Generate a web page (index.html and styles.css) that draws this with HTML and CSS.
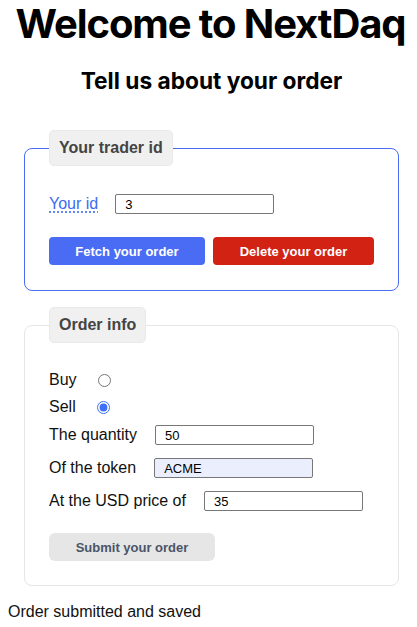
FILE: index.html
```html
<!DOCTYPE html>
<html lang="en">
<head>
<meta charset="utf-8">
<title>NextDaq</title>
<link rel="stylesheet" href="styles.css">
</head>
<body>
<h1 class="title">Welcome to NextDaq</h1>
<h2 class="subtitle">Tell us about your order</h2>

<fieldset class="box box-active">
  <legend class="box-legend">Your trader id</legend>
  <div class="row row-id">
    <label class="label label-link" for="trader">Your id</label>
    <input class="field" id="trader" type="text" value="3">
  </div>
  <div class="actions">
    <button class="btn btn-fetch" type="button">Fetch your order</button>
    <button class="btn btn-delete" type="button">Delete your order</button>
  </div>
</fieldset>

<fieldset class="box box-plain">
  <legend class="box-legend">Order info</legend>
  <div class="row row-radio">
    <label class="label" for="buy">Buy</label>
    <input class="radio" id="buy" type="radio" name="side">
  </div>
  <div class="row row-radio row-sell">
    <label class="label" for="sell">Sell</label>
    <input class="radio" id="sell" type="radio" name="side" checked>
  </div>
  <div class="row row-input row-qty">
    <label class="label" for="qty">The quantity</label>
    <input class="field" id="qty" type="text" value="50">
  </div>
  <div class="row row-input">
    <label class="label" for="token">Of the token</label>
    <input class="field field-filled" id="token" type="text" value="ACME">
  </div>
  <div class="row row-input">
    <label class="label" for="price">At the USD price of</label>
    <input class="field" id="price" type="text" value="35">
  </div>
  <div class="actions actions-submit">
    <button class="btn btn-submit" type="button">Submit your order</button>
  </div>
</fieldset>

<p class="status">Order submitted and saved</p>
</body>
</html>
```

FILE: styles.css
```css
body {
  margin: 0 8px;
  font-family: "Liberation Sans", Arial, sans-serif;
  font-size: 16px;
  color: #111;
  background: #fff;
}

.title {
  display: flex;
  justify-content: center;
  margin: 0 0 0 4px;
  font-family: Inter, "Noto Sans", sans-serif;
  font-size: 40px;
  font-weight: 700;
  line-height: 48px;
  letter-spacing: -1.1px;
  white-space: nowrap;
  color: #000;
}

.subtitle {
  margin: 19px 0 36px;
  padding-left: 6px;
  font-family: Inter, "Noto Sans", sans-serif;
  font-size: 22.7px;
  font-weight: 700;
  line-height: 27px;
  text-align: center;
  color: #000;
}

.box {
  box-sizing: border-box;
  width: 375px;
  margin: 0 0 0 16px;
  padding: 25px 24px 25px 24px;
  border-radius: 8px;
  min-inline-size: 0;
}

.box-active {
  border: 1px solid #4a6cf4;
}

.box-plain {
  margin-top: 16px;
  padding-bottom: 24px;
  border: 1px solid #e6e6e6;
}

.box-legend {
  padding: 8px 9px;
  border: 1px solid #e9e9e9;
  border-radius: 5px;
  background: #f0f0f0;
  color: #444;
  font-size: 16px;
  font-weight: 700;
  line-height: 18px;
}

.row {
  display: flex;
  align-items: center;
}

.row-id {
  height: 26px;
}

.row-radio {
  height: 24px;
}

.row-sell {
  margin-top: 3px;
}

.row-input {
  height: 26px;
  margin-top: 7px;
}

.row-qty {
  margin-top: 3px;
}

.label {
  margin-right: 18px;
  line-height: 18px;
}

.label-link {
  margin-right: 17px;
  color: #3d6cf0;
  text-decoration: underline dotted #3d6cf0;
  text-underline-offset: 3px;
}

.radio {
  width: 13px;
  height: 13px;
  margin: 0 0 0 3px;
  accent-color: #3f6ff5;
}

.field {
  box-sizing: border-box;
  width: 159px;
  height: 20px;
  margin: 0;
  padding: 0 9px;
  border: 1px solid #777;
  border-radius: 2px;
  font-family: "Liberation Sans", Arial, sans-serif;
  font-size: 13px;
  color: #000;
  background: #fff;
}

.field-filled {
  background: #ebeefd;
}

.actions {
  display: flex;
  gap: 8px;
  margin-top: 20px;
}

.actions-submit {
  margin-top: 19px;
}

.btn {
  box-sizing: border-box;
  height: 28px;
  padding: 0 24px;
  border: none;
  border-radius: 4px;
  font-family: "Liberation Sans", Arial, sans-serif;
  font-size: 13px;
  font-weight: 700;
  color: #fff;
}

.btn-fetch {
  width: 156px;
  background: #4a6cf4;
}

.btn-delete {
  width: 161px;
  background: #d22214;
}

.btn-submit {
  width: 166px;
  border-radius: 6px;
  background: #e6e6e6;
  color: #4a5568;
}

.status {
  margin: 17px 0 0;
  line-height: 18px;
}
```
